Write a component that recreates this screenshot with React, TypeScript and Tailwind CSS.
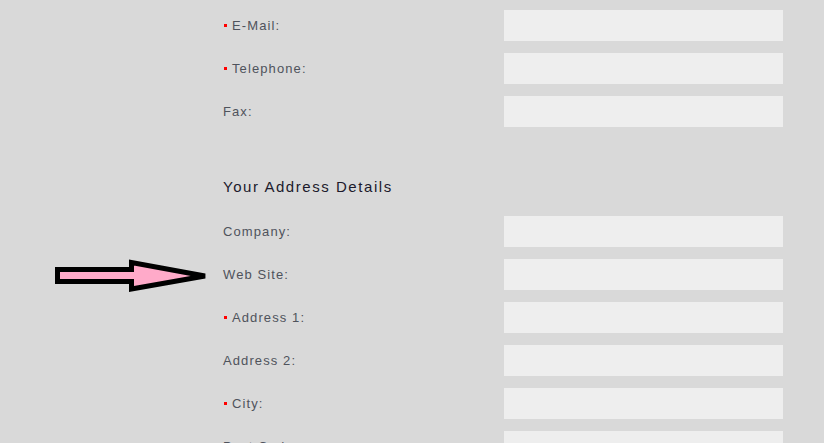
import React from "react";

const font = { fontFamily: '"Liberation Sans", Arial, sans-serif' };

function Row({ label, req }: { label: string; req?: boolean }) {
  return (
    <div className="flex items-center h-[31px] mb-[12px]">
      <div className="w-[281px] flex items-center text-[13px] tracking-[1.1px] text-[#4f535c]">
        {req ? <span className="inline-block w-[3px] h-[3px] bg-[#ff0000] ml-[1px] mr-[5px] -mt-[1px]" /> : null}
        <span>{label}</span>
      </div>
      <div className="w-[279px] h-[31px] bg-[#eeeeee]" />
    </div>
  );
}

export default function App() {
  return (
    <div className="relative w-[824px] h-[443px] overflow-hidden bg-[#d9d9d9]" style={font}>
      <div className="pl-[223px] pt-[10px]">
        <Row label="E-Mail:" req />
        <Row label="Telephone:" req />
        <Row label="Fax:" />
        <div className="mt-[50px] mb-[19px] h-[20px] leading-[20px] text-[15px] tracking-[1.55px] text-[#1c1a2c]">
          Your Address Details
        </div>
        <Row label="Company:" />
        <Row label="Web Site:" />
        <Row label="Address 1:" req />
        <Row label="Address 2:" />
        <Row label="City:" req />
        <Row label="Post Code:" />
      </div>
      <svg className="absolute left-0 top-0" width="824" height="443" viewBox="0 0 824 443">
        <polygon
          points="57.5,269.5 131.5,269.5 131.5,262.5 205,276 131.5,289 131.5,281.5 57.5,281.5"
          fill="#ffaac9"
          stroke="#000"
          strokeWidth="5"
          strokeLinejoin="miter"
        />
      </svg>
    </div>
  );
}
